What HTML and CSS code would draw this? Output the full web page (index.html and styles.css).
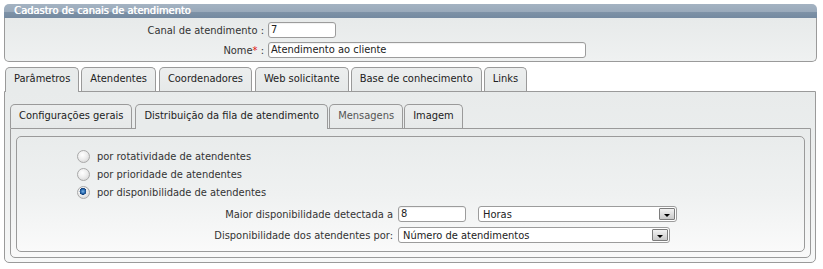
FILE: index.html
```html
<!DOCTYPE html>
<html lang="pt">
<head>
<meta charset="utf-8">
<title>Cadastro de canais de atendimento</title>
<link rel="stylesheet" href="styles.css">
</head>
<body>
<div class="page">
  <div class="panel">
    <div class="panel-head">Cadastro de canais de atendimento</div>
    <div class="panel-body">
      <div class="frow">
        <span class="flabel">Canal de atendimento :</span>
        <span class="input w-code">7</span>
      </div>
      <div class="frow">
        <span class="flabel">Nome<span class="req">*</span> :</span>
        <span class="input w-name">Atendimento ao cliente</span>
      </div>
    </div>
  </div>

  <div class="tabs outer-tabs">
    <span class="tab active">Parâmetros</span>
    <span class="tab">Atendentes</span>
    <span class="tab">Coordenadores</span>
    <span class="tab">Web solicitante</span>
    <span class="tab">Base de conhecimento</span>
    <span class="tab">Links</span>
  </div>
  <div class="tabpanel outer-panel">
    <div class="tabs inner-tabs">
      <span class="tab">Configurações gerais</span>
      <span class="tab active">Distribuição da fila de atendimento</span>
      <span class="tab muted">Mensagens</span>
      <span class="tab">Imagem</span>
    </div>
    <div class="tabpanel inner-panel">
      <div class="fieldset">
        <div class="radios">
          <div class="rrow"><span class="radio"></span><span>por rotatividade de atendentes</span></div>
          <div class="rrow"><span class="radio"></span><span>por prioridade de atendentes</span></div>
          <div class="rrow"><span class="radio checked"></span><span>por disponibilidade de atendentes</span></div>
        </div>
        <div class="frow2">
          <span class="flabel2">Maior disponibilidade detectada a</span>
          <span class="input w-num">8</span>
          <span class="select w-unit">Horas<span class="sbtn"></span></span>
        </div>
        <div class="frow2">
          <span class="flabel2">Disponibilidade dos atendentes por:</span>
          <span class="select w-by">Número de atendimentos<span class="sbtn"></span></span>
        </div>
      </div>
    </div>
  </div>
</div>
</body>
</html>
```

FILE: styles.css
```css
html, body {
  margin: 0;
  padding: 0;
  background: #ffffff;
}
body {
  font-family: "DejaVu Sans Condensed", "DejaVu Sans", Verdana, sans-serif;
  font-stretch: condensed;
  font-size: 11px;
  color: #333333;
}
.page {
  padding: 4px 6px 0 4px;
}

/* top panel */
.panel {
  border-radius: 5px;
}
.panel-head {
  height: 14px;
  line-height: 14px;
  padding-left: 10px;
  color: #ffffff;
  border-radius: 5px 5px 0 0;
  background: linear-gradient(#a4b3c2 0%, #9aaabb 55%, #7e92a7 57%, #7489a0 100%);
  text-shadow: 0.5px 0 0 #ffffff;
}
.panel-body {
  border: 1px solid #9a9a9a;
  border-top: none;
  border-radius: 0 0 5px 5px;
  background: linear-gradient(#e7eaea, #eff1f1);
  padding: 4px 0 3px 0;
  display: flex;
  flex-direction: column;
  gap: 4px;
}
.frow {
  display: flex;
  align-items: center;
  gap: 4px;
}
.flabel {
  width: 259px;
  text-align: right;
  color: #333333;
}
.req {
  color: #e01010;
}
.input {
  box-sizing: border-box;
  display: inline-block;
  height: 16px;
  line-height: 14px;
  border: 1px solid #9c9c9c;
  border-radius: 3px;
  background: #ffffff;
  padding-left: 2px;
  color: #222222;
  box-shadow: inset 1px 1px 1px rgba(0,0,0,0.06);
}
.w-code { width: 68px; }
.w-name { width: 318px; }
.w-num { width: 68px; }

/* tabs */
.tabs {
  display: flex;
  gap: 2px;
  position: relative;
  z-index: 1;
}
.outer-tabs {
  margin-top: 5px;
  padding-left: 1px;
}
.tab {
  box-sizing: border-box;
  height: 24px;
  line-height: 22px;
  padding: 0 8px;
  border: 1px solid #9a9a9a;
  border-bottom: none;
  border-radius: 5px 5px 0 0;
  background: linear-gradient(#eceeee, #e6e9e9);
  color: #222222;
  white-space: nowrap;
}
.tab.active {
  height: 25px;
  margin-bottom: -1px;
  background: #e8ebeb;
}
.tab.muted {
  color: #555555;
}
.outer-tabs .tab:nth-child(3),
.outer-tabs .tab:nth-child(4) {
  margin-left: 1px;
}

.tabpanel {
  border: 1px solid #9a9a9a;
  border-radius: 0 0 5px 5px;
}
.outer-panel {
  margin-right: 1px;
  padding: 12px 4px 4px 5px;
  background: linear-gradient(#e8ebeb 0%, #edefef 50%, #f7f8f8 100%);
}
.inner-tabs {
  gap: 1px;
}
.inner-tabs .tab:nth-child(2) {
  margin-left: 2px;
}
.inner-panel {
  padding: 7px 5px 5px 5px;
  background: linear-gradient(#e8ebeb 0%, #eef0f0 50%, #f9f9f9 100%);
}
.fieldset {
  border: 1px solid #9a9a9a;
  border-radius: 5px;
  padding: 10px 0 8px 0;
  background: linear-gradient(#e9ecec 0%, #eff1f1 50%, #fafafa 100%);
}
.radios {
  padding-left: 60px;
  display: flex;
  flex-direction: column;
}
.rrow {
  height: 18px;
  display: flex;
  align-items: center;
  gap: 7px;
  color: #333333;
}
.radio {
  box-sizing: border-box;
  width: 13px;
  height: 13px;
  border-radius: 50%;
  border: 1px solid #a8a8a8;
  background: radial-gradient(circle at 40% 35%, #ffffff 0%, #eeeeee 45%, #cfcfcf 100%);
}
.radio.checked {
  background:
    radial-gradient(circle at 45% 40%, #7fb6e6 0%, #2d6fb5 22%, #123f78 36%, rgba(0,0,0,0) 40%),
    radial-gradient(circle at 40% 35%, #ffffff 0%, #eeeeee 45%, #cfcfcf 100%);
}
.frow2 {
  display: flex;
  align-items: center;
  gap: 5px;
  margin-top: 5px;
}
.frow2:first-of-type {
  margin-top: 6px;
}
.flabel2 {
  width: 376px;
  text-align: right;
  color: #333333;
}
.select {
  box-sizing: border-box;
  display: inline-flex;
  align-items: center;
  justify-content: space-between;
  height: 16px;
  border: 1px solid #9c9c9c;
  border-radius: 3px;
  background: #ffffff;
  padding: 0 1px 0 4px;
  color: #222222;
}
.w-unit { width: 199px; margin-left: 7px; }
.w-by { width: 272px; }
.sbtn {
  box-sizing: border-box;
  position: relative;
  width: 16px;
  height: 12px;
  border: 1px solid #7c7c7c;
  border-radius: 1px;
  background: linear-gradient(#f2f2f2, #c9c9c9);
}
.sbtn::after {
  content: "";
  position: absolute;
  left: 4px;
  top: 5px;
  border-left: 3px solid transparent;
  border-right: 3px solid transparent;
  border-top: 3px solid #000000;
}
```
